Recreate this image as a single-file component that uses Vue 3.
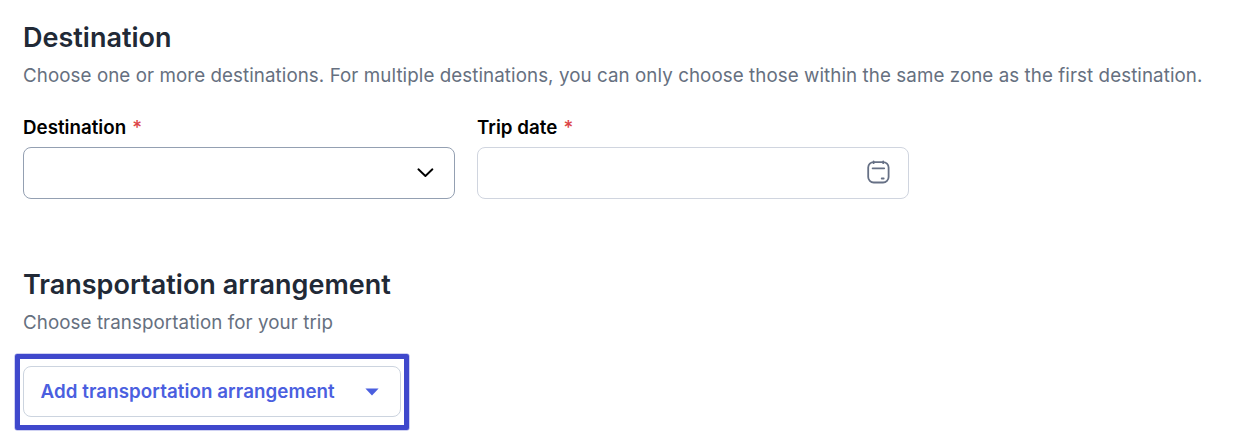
<script setup>
import { ref } from 'vue'

const fields = ref([
  { id: 'destination', label: 'Destination', icon: 'chevron' },
  { id: 'trip-date', label: 'Trip date', icon: 'calendar' },
])
</script>

<template>
  <main class="trip-form">
    <section class="section">
      <h2 class="section__title">Destination</h2>
      <p class="section__hint">
        Choose one or more destinations. For multiple destinations, you can only choose those within the same zone as
        the first destination.
      </p>

      <div class="fields">
        <div v-for="field in fields" :key="field.id" class="field">
          <span class="field__label">{{ field.label }} <span class="field__required">*</span></span>
          <div class="field__control" :class="`field__control--${field.icon}`">
            <svg v-if="field.icon === 'chevron'" class="field__chevron" viewBox="0 0 18 12">
              <path d="M2.4 2.3 L9.4 9 L16.4 2.3" />
            </svg>
            <svg v-else class="field__calendar" viewBox="0 0 24 26">
              <rect x="2.2" y="3.1" width="20.4" height="20.4" rx="5.5" />
              <path d="M7.6 2.4V4.2M17.2 2.4V4.2M6.6 9.3H18.2M15.7 19.5H17.7" />
            </svg>
          </div>
        </div>
      </div>
    </section>

    <section class="section">
      <h2 class="section__title">Transportation arrangement</h2>
      <p class="section__hint">Choose transportation for your trip</p>

      <div class="highlight">
        <button type="button" class="add-button">
          <span>Add transportation arrangement</span>
          <svg class="add-button__caret" viewBox="0 0 14 8">
            <path d="M0.4 0.5H13.6L7 7.5Z" />
          </svg>
        </button>
      </div>
    </section>
  </main>
</template>

<style>
body {
  background: #fff;
}
</style>

<style scoped>
.trip-form {
  box-sizing: border-box;
  height: 446px;
  padding: 20px 23px 0;
  overflow: hidden;
  font-family: Inter, 'Liberation Sans', sans-serif;
}

.section + .section {
  margin-top: 68px;
}

.section__title {
  margin: 0;
  font-size: 27px;
  font-weight: 600;
  line-height: 35px;
  color: #212936;
}

.section__hint {
  margin: 7px 0 0;
  font-size: 18.75px;
  line-height: 28px;
  letter-spacing: 0.073px;
  color: #667080;
  white-space: nowrap;
}

.fields {
  display: flex;
  gap: 22px;
  margin-top: 24px;
}

.field {
  width: 432px;
}

.field__label {
  display: block;
  font-size: 18.75px;
  font-weight: 600;
  line-height: 28px;
  color: #000;
}

.field__required {
  margin-left: 1.5px;
  font-weight: 500;
  color: #dc4446;
}

.field__control {
  display: flex;
  box-sizing: border-box;
  align-items: center;
  justify-content: flex-end;
  height: 52px;
  margin-top: 5px;
  border: 1px solid #d0d5df;
  border-radius: 8px;
}

.field__control--chevron {
  padding-right: 20px;
  border-color: #94a0b2;
}

.field__control--calendar {
  padding: 0 18px 2px 0;
}

.field__chevron,
.field__calendar {
  fill: none;
  stroke-linecap: round;
  stroke-linejoin: round;
}

.field__chevron {
  width: 18px;
  height: 12px;
  stroke: #000;
  stroke-width: 1.9;
}

.field__calendar {
  width: 24px;
  height: 26px;
  stroke: #667085;
  stroke-width: 1.8;
}

.highlight {
  width: fit-content;
  margin: 17px 0 0 -8px;
  padding: 7px 3px 8px;
  border: 5px solid #3f48cc;
  border-radius: 2px;
  box-shadow: 0 0 0 0.5px rgba(63, 72, 204, 0.5);
}

.add-button {
  display: flex;
  box-sizing: border-box;
  align-items: center;
  justify-content: space-between;
  width: 378px;
  height: 51px;
  padding: 0 21px 0 16.5px;
  border: 1px solid #ccd4df;
  border-radius: 8px;
  background: #fff;
  font-family: inherit;
  font-size: 18.75px;
  font-weight: 600;
  line-height: 28px;
  letter-spacing: 0.07px;
  color: #4b5fdf;
  white-space: nowrap;
}

.add-button__caret {
  width: 14px;
  height: 8px;
  fill: currentColor;
}
</style>
